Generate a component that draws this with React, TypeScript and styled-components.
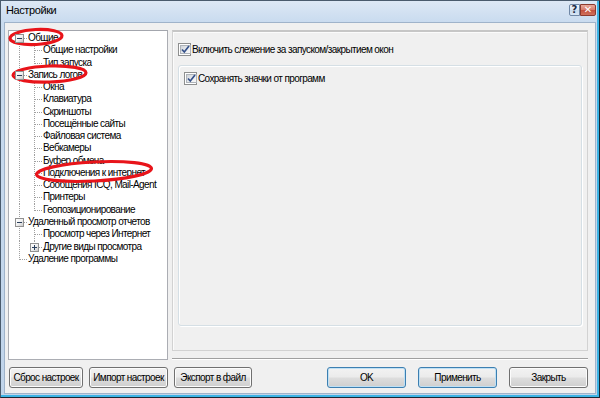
import React from 'react';
import styled, { createGlobalStyle } from 'styled-components';

const FONT = `"Liberation Sans", Arial, sans-serif`;

const Global = createGlobalStyle`
  html, body { margin: 0; padding: 0; width: 600px; height: 398px; overflow: hidden; background: #fff; }
  #root { width: 600px; height: 398px; }
`;

const Frame = styled.div`
  position: relative;
  width: 600px;
  height: 398px;
  box-sizing: border-box;
  border: 1px solid #4a5b6d;
  border-right-color: #1c2733;
  border-bottom-color: #1c2733;
  background: linear-gradient(180deg, #dde8f5 0px, #c9dbef 21px, #c0d4ea 100%);
  box-shadow: inset -2px -2px 0 #3cb4e5;
  display: flex;
  flex-direction: column;
  font-family: ${FONT};
  font-size: 10px;
  letter-spacing: -0.6px;
  color: #000;
`;

const TitleBar = styled.div`
  height: 21px;
  flex: 0 0 21px;
  display: flex;
  align-items: flex-start;
  justify-content: space-between;
  padding: 0 3px 0 5px;
`;

const Title = styled.span`
  font-size: 11px;
  line-height: 19px;
  letter-spacing: -0.4px;
  color: #000;
`;

const Caption = styled.div`
  display: flex;
  margin-top: 3px;
`;

const CapBtn = styled.div<{ $close?: boolean }>`
  width: ${p => (p.$close ? '16px' : '11px')};
  height: 12px;
  box-sizing: border-box;
  border: 1px solid ${p => (p.$close ? '#8c3a2e' : '#6f87a6')};
  border-radius: ${p => (p.$close ? '0 2px 2px 0' : '2px 0 0 2px')};
  background: ${p =>
    p.$close
      ? 'linear-gradient(180deg, #e9a99b 0%, #d7796a 50%, #c34f3c 51%, #d0705c 100%)'
      : 'linear-gradient(180deg, #f1f6fb 0%, #d9e6f3 50%, #c6d8ec 51%, #d8e6f4 100%)'};
  display: flex;
  align-items: center;
  justify-content: center;
  font-family: "DejaVu Sans", sans-serif;
  font-weight: bold;
  font-size: 10px;
  line-height: 10px;
  letter-spacing: 0;
  color: ${p => (p.$close ? '#fff' : '#1d2c44')};
`;

const Client = styled.div`
  flex: 1;
  margin: 0 3px 3px 3px;
  background: #f0f0f0;
  border: 1px solid #9fb3ca;
  box-sizing: border-box;
  padding: 7px 7px 5px 3px;
  display: flex;
  flex-direction: column;
  gap: 7px;
`;

const Body = styled.div`
  height: 330px;
  display: flex;
  gap: 4px;
`;

const Tree = styled.div`
  width: 160px;
  flex: 0 0 160px;
  box-sizing: border-box;
  background: #fff;
  border: 1px solid #abadb3;
  border-top-color: #a3a6ad;
  padding: 1px 0 0 3px;
  overflow: hidden;
`;

const Row = styled.div`
  display: flex;
  height: 12.28px;
  line-height: 12.28px;
  white-space: nowrap;
`;

const Guide = styled.span<{ $up: boolean; $down: boolean; $h: boolean }>`
  position: relative;
  flex: 0 0 15px;
  height: 100%;
  &::before {
    content: '';
    display: ${p => (p.$up || p.$down ? 'block' : 'none')};
    position: absolute;
    left: 7px;
    width: 1px;
    top: ${p => (p.$up ? '0' : '6px')};
    bottom: ${p => (p.$down ? '0' : 'calc(100% - 7px)')};
    background-image: linear-gradient(180deg, #a0a0a0 50%, transparent 50%);
    background-size: 1px 2px;
  }
  &::after {
    content: '';
    display: ${p => (p.$h ? 'block' : 'none')};
    position: absolute;
    left: 8px;
    right: 0;
    top: 6px;
    height: 1px;
    background-image: linear-gradient(90deg, #a0a0a0 50%, transparent 50%);
    background-size: 2px 1px;
  }
`;

const Expander = styled.span<{ $plus: boolean }>`
  position: absolute;
  z-index: 2;
  left: 3px;
  top: 2px;
  width: 9px;
  height: 9px;
  box-sizing: border-box;
  border: 1px solid #919191;
  background: linear-gradient(135deg, #ffffff 0%, #f0f0f0 50%, #c9c9c9 100%);
  &::before {
    content: '';
    position: absolute;
    left: 1px;
    top: 3px;
    width: 5px;
    height: 1px;
    background: #2b3f5c;
  }
  &::after {
    content: '';
    display: ${p => (p.$plus ? 'block' : 'none')};
    position: absolute;
    left: 3px;
    top: 1px;
    width: 1px;
    height: 5px;
    background: #2b3f5c;
  }
`;

const Label = styled.span`
  margin-left: 1px;
  color: #000;
`;

const RightCol = styled.div`
  flex: 1;
  display: flex;
  flex-direction: column;
`;

const Panel = styled.div`
  height: 321px;
  box-sizing: border-box;
  border: 1px solid #d2d2d2;
  border-top: 2px solid #c6c6c6;
  box-shadow: inset 1px 1px 0 #fbfbfb;
  background: #f0f0f0;
  padding: 11px 5px 0 5px;
  display: flex;
  flex-direction: column;
  gap: 9px;
`;

const Group = styled.div`
  height: 261px;
  box-sizing: border-box;
  border: 1px solid #d5dfe5;
  border-radius: 3px;
  box-shadow: inset 1px 1px 0 #fff, 1px 1px 0 #fff;
  padding: 6px 5px;
`;

const CheckRow = styled.label`
  display: flex;
  align-items: center;
  gap: 1px;
  height: 13px;
  line-height: 13px;
  white-space: nowrap;
`;

const Box = styled.span`
  width: 13px;
  height: 13px;
  flex: 0 0 13px;
  box-sizing: border-box;
  border: 1px solid #8e8f8f;
  background: #fff;
  padding: 1px;
  display: flex;
`;

const BoxInner = styled.span`
  flex: 1;
  border: 1px solid #aeb3b9;
  background: linear-gradient(135deg, #cfd3d9 0%, #eceef0 60%, #f8f8f8 100%);
  display: flex;
  align-items: center;
  justify-content: center;
`;

const Separator = styled.div`
  margin-top: 7px;
  height: 2px;
  border-top: 1px solid #a0a0a0;
  border-bottom: 1px solid #ffffff;
  box-sizing: border-box;
`;

const Footer = styled.div`
  height: 21px;
  display: flex;
  justify-content: space-between;
`;

const BtnGroup = styled.div<{ $gap: number; $pad?: number }>`
  display: flex;
  gap: ${p => p.$gap}px;
  padding-left: ${p => p.$pad ?? 0}px;
`;

const Button = styled.button<{ $w: number; $default?: boolean }>`
  width: ${p => p.$w}px;
  height: 21px;
  box-sizing: border-box;
  padding: 0;
  margin: 0;
  white-space: nowrap;
  font-family: ${FONT};
  font-size: 10px;
  letter-spacing: -0.6px;
  color: #000;
  border: 1px solid ${p => (p.$default ? '#3c7fb1' : '#707070')};
  border-radius: 3px;
  background: linear-gradient(180deg, #f2f2f2 0%, #ebebeb 48%, #dddddd 52%, #cfcfcf 100%);
  box-shadow: inset 0 0 0 1px ${p => (p.$default ? '#bfe0f4' : '#fcfcfc')};
`;

const Marks = styled.svg`
  position: absolute;
  left: -1px;
  top: -1px;
  width: 600px;
  height: 398px;
  pointer-events: none;
`;

type Kind = 'F' | 'T' | 'L' | 'I';
type Item = { t: string; g: Kind[]; e?: 'minus' | 'plus' };

const items: Item[] = [
  { t: 'Общие', g: ['F'], e: 'minus' },
  { t: 'Общие настройки', g: ['I', 'T'] },
  { t: 'Тип запуска', g: ['I', 'L'] },
  { t: 'Запись логов', g: ['T'], e: 'minus' },
  { t: 'Окна', g: ['I', 'T'] },
  { t: 'Клавиатура', g: ['I', 'T'] },
  { t: 'Скриншоты', g: ['I', 'T'] },
  { t: 'Посещённые сайты', g: ['I', 'T'] },
  { t: 'Файловая система', g: ['I', 'T'] },
  { t: 'Вебкамеры', g: ['I', 'T'] },
  { t: 'Буфер обмена', g: ['I', 'T'] },
  { t: 'Подключения к интернет', g: ['I', 'T'] },
  { t: 'Сообщения ICQ, Mail-Agent', g: ['I', 'T'] },
  { t: 'Принтеры', g: ['I', 'T'] },
  { t: 'Геопозиционирование', g: ['I', 'L'] },
  { t: 'Удаленный просмотр отчетов', g: ['T'], e: 'minus' },
  { t: 'Просмотр через Интернет', g: ['I', 'T'] },
  { t: 'Другие виды просмотра', g: ['I', 'L'], e: 'plus' },
  { t: 'Удаление программы', g: ['L'] },
];

function TreeRow({ item }: { item: Item }) {
  const last = item.g.length - 1;
  return (
    <Row>
      {item.g.map((k, i) => (
        <Guide
          key={i}
          $up={k !== 'F'}
          $down={k !== 'L'}
          $h={i === last}
        >
          {i === last && item.e && <Expander $plus={item.e === 'plus'} />}
        </Guide>
      ))}
      <Label>{item.t}</Label>
    </Row>
  );
}

function Check({ label }: { label: string }) {
  return (
    <CheckRow>
      <Box>
        <BoxInner>
          <svg width="9" height="9" viewBox="0 0 9 9">
            <path d="M1 4.5 L3.3 7 L8 1" fill="none" stroke="#34508a" strokeWidth="1.7" />
          </svg>
        </BoxInner>
      </Box>
      <span>{label}</span>
    </CheckRow>
  );
}

export default function App() {
  return (
    <>
      <Global />
      <Frame>
        <TitleBar>
          <Title>Настройки</Title>
          <Caption>
            <CapBtn>?</CapBtn>
            <CapBtn $close>✕</CapBtn>
          </Caption>
        </TitleBar>
        <Client>
          <Body>
            <Tree>
              {items.map(it => (
                <TreeRow key={it.t} item={it} />
              ))}
            </Tree>
            <RightCol>
              <Panel>
                <Check label="Включить слежение за запуском/закрытием окон" />
                <Group>
                  <Check label="Сохранять значки от программ" />
                </Group>
              </Panel>
              <Separator />
            </RightCol>
          </Body>
          <Footer>
            <BtnGroup $gap={6} $pad={1}>
              <Button $w={74}>Сброс настроек</Button>
              <Button $w={79}>Импорт настроек</Button>
              <Button $w={78}>Экспорт в файл</Button>
            </BtnGroup>
            <BtnGroup $gap={12}>
              <Button $w={79} $default>OK</Button>
              <Button $w={79} $default>Применить</Button>
              <Button $w={79}>Закрыть</Button>
            </BtnGroup>
          </Footer>
        </Client>
        <Marks viewBox="0 0 600 398">
          <g fill="none" stroke="#e8141a" strokeWidth="3.2">
            <ellipse cx="36" cy="37" rx="26" ry="7.5" transform="rotate(-3 36 37)" />
            <ellipse cx="49.5" cy="74" rx="36.5" ry="8" transform="rotate(-2 49.5 74)" />
            <ellipse cx="94" cy="171.5" rx="57.5" ry="9.5" transform="rotate(-3 94 171.5)" />
          </g>
        </Marks>
      </Frame>
    </>
  );
}
